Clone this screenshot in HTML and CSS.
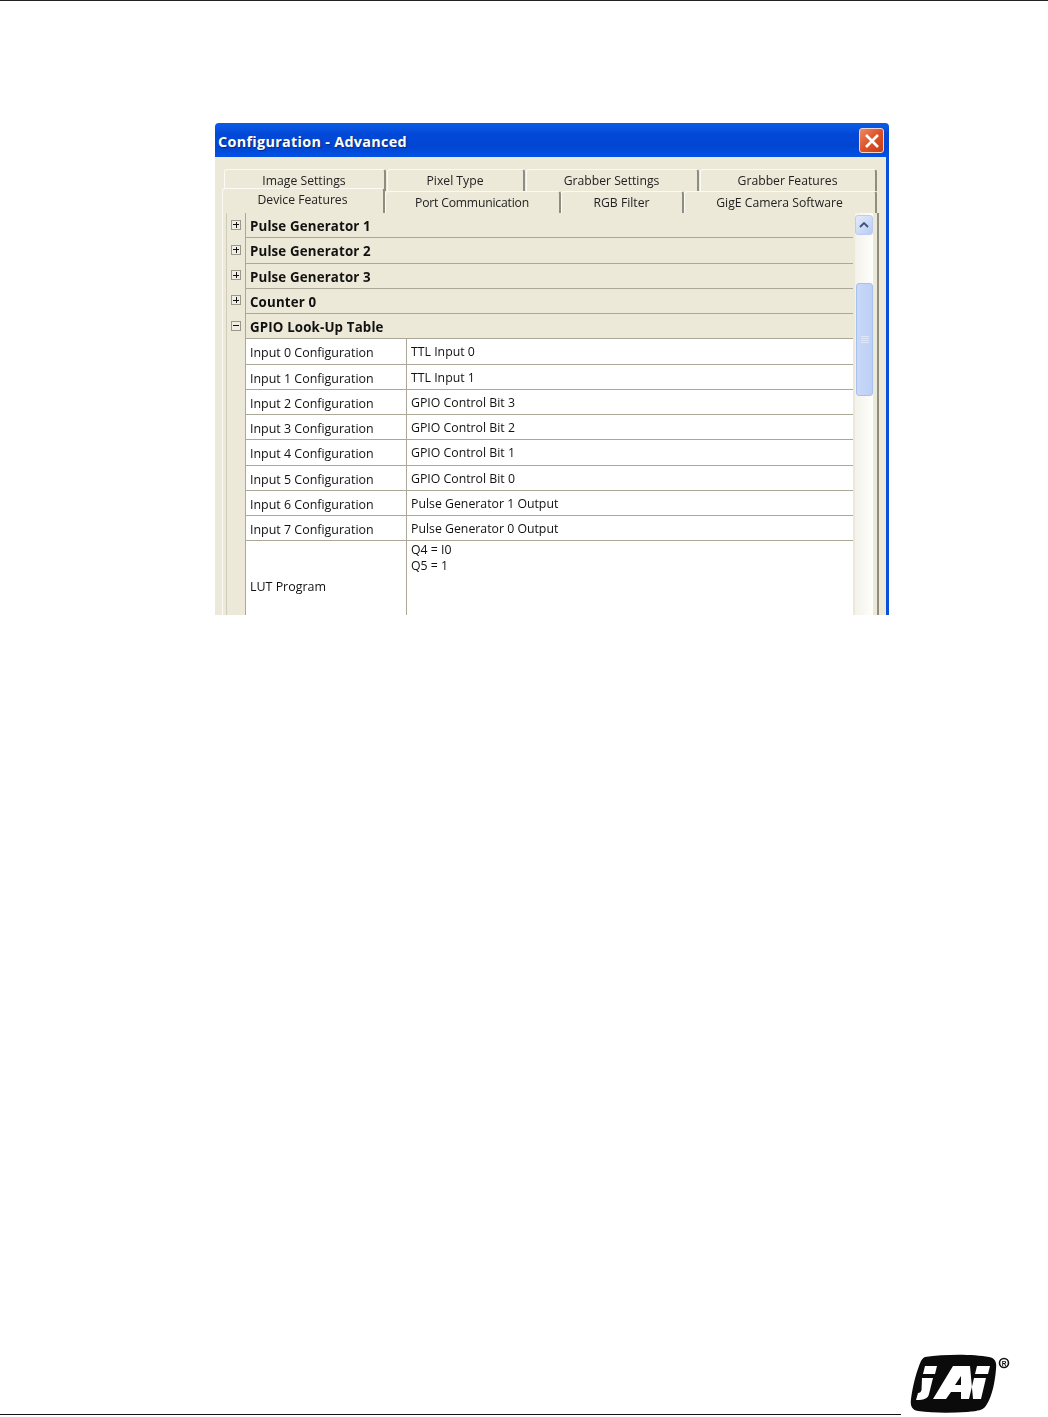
FILE: index.html
```html
<!DOCTYPE html>
<html lang="en">
<head>
<meta charset="utf-8">
<title>Configuration - Advanced</title>
<link rel="stylesheet" href="styles.css">
</head>
<body>
<div class="page">
  <div class="top-rule"></div>
  <section class="window">
    <header class="titlebar">
      <span class="title">Configuration - Advanced</span>
      <span class="close"><svg viewBox="0 0 12 12" width="16" height="16"><path d="M1.5 1.5l9 9M10.500 1.500l-9 9" stroke="#fff" stroke-width="2" fill="none"/></svg></span>
    </header>
    <div class="client">
      <div class="tabs tabs-back">
        <div class="tab t1">Image Settings</div>
        <div class="tab t2">Pixel Type</div>
        <div class="tab t3">Grabber Settings</div>
        <div class="tab t4">Grabber Features</div>
      </div>
      <div class="tabs tabs-front">
        <div class="tab active f1">Device Features</div>
        <div class="tab f2">Port Communication</div>
        <div class="tab f3">RGB Filter</div>
        <div class="tab f4">GigE Camera Software</div>
      </div>
      <div class="panel">
        <div class="grid">
          <div class="row section"><span class="gutter"><i class="box plus"></i></span><span class="head">Pulse Generator 1</span></div>
          <div class="row section"><span class="gutter"><i class="box plus"></i></span><span class="head">Pulse Generator 2</span></div>
          <div class="row section"><span class="gutter"><i class="box plus"></i></span><span class="head">Pulse Generator 3</span></div>
          <div class="row section"><span class="gutter"><i class="box plus"></i></span><span class="head">Counter 0</span></div>
          <div class="row section"><span class="gutter"><i class="box"></i></span><span class="head">GPIO Look-Up Table</span></div>
          <div class="row"><span class="gutter"></span><span class="name">Input 0 Configuration</span><span class="value">TTL Input 0</span></div>
          <div class="row"><span class="gutter"></span><span class="name">Input 1 Configuration</span><span class="value">TTL Input 1</span></div>
          <div class="row"><span class="gutter"></span><span class="name">Input 2 Configuration</span><span class="value">GPIO Control Bit 3</span></div>
          <div class="row"><span class="gutter"></span><span class="name">Input 3 Configuration</span><span class="value">GPIO Control Bit 2</span></div>
          <div class="row"><span class="gutter"></span><span class="name">Input 4 Configuration</span><span class="value">GPIO Control Bit 1</span></div>
          <div class="row"><span class="gutter"></span><span class="name">Input 5 Configuration</span><span class="value">GPIO Control Bit 0</span></div>
          <div class="row"><span class="gutter"></span><span class="name">Input 6 Configuration</span><span class="value">Pulse Generator 1 Output</span></div>
          <div class="row"><span class="gutter"></span><span class="name">Input 7 Configuration</span><span class="value">Pulse Generator 0 Output</span></div>
          <div class="row lut"><span class="gutter"></span><span class="name">LUT Program</span><span class="value">Q4 = I0<br>Q5 = 1</span></div>
        </div>
        <div class="scrollbar">
          <div class="sb-btn"><svg viewBox="0 0 10 6" width="10" height="6"><path d="M1 5l4-4 4 4" stroke="#3f5279" stroke-width="1.800" fill="none"/></svg></div>
          <div class="sb-thumb"><i></i><i></i><i></i><i></i></div>
        </div>
      </div>
    </div>
  </section>
  <footer class="footer">
    <div class="bottom-rule"></div>
    <svg class="logo" viewBox="0 0 110 67" width="110" height="67" role="img" aria-label="JAI logo">
      <path d="M20 7C40 4 68 4 84 7C90 8 92 12 91 19C90 32 87 46 82 54C79 60 74 61 62 62C44 63 28 63 13 61C7 60 5 56 6 49C8 34 12 20 16 11C17 9 18 8 20 7Z" fill="#0b0b0b"/>
      <path fill-rule="evenodd" d="M20 16h12l-2 8h-12ZM17 28h11l-4 16c-1 4-4 6-13 6l2-7c2 0 3-1 3.500-3ZM48 16h17l3 33h-12v-7h-10l-5 7h-13ZM56 26l-6 9h6ZM72 16h13l-2 8h-13ZM69 28h12l-5 21h-12Z" fill="#fff"/>
      <circle cx="99" cy="13" r="4.500" fill="none" stroke="#111" stroke-width="1.600"/>
      <text class="reg" x="99" y="15.500" text-anchor="middle">R</text>
    </svg>
  </footer>
</div>
</body>
</html>
```
FILE: styles.css
```css
* { box-sizing: border-box; }
html, body { margin: 0; padding: 0; background: #fff; }
.page {
  width: 1048px;
  height: 1417px;
  display: flex;
  flex-direction: column;
  overflow: hidden;
}
.top-rule { height: 1px; background: #222; flex: none; }
.window {
  flex: none;
  width: 674px;
  height: 492px;
  margin: 122px 0 0 215px;
  display: flex;
  flex-direction: column;
  overflow: hidden;
  background: #ece9d8;
  border-radius: 4px 4px 0 0;
  filter: blur(0.35px);
}
.titlebar {
  flex: none;
  height: 34px;
  display: flex;
  align-items: center;
  justify-content: space-between;
  padding: 1px 5px 0 3px;
  background: linear-gradient(#0a5ce0 0, #0a58e4 10%, #0349d8 30%, #0146d2 70%, #0152e6 100%);
}
.title {
  font: bold 14.400px "Open Sans", sans-serif;
  color: #fff;
  text-shadow: 1px 1px 1px #0a2a80;
  letter-spacing: 0.300px;
  padding-top: 2px;
}
.close {
  width: 25px;
  height: 25px;
  display: flex;
  align-items: center;
  justify-content: center;
  border: 1px solid #f0d8d0;
  border-radius: 3px;
  background: linear-gradient(135deg, #ee8a68, #dc5228 50%, #c93c14);
}
.client {
  flex: 1;
  min-height: 0;
  padding: 12px 3px 0 0;
  border-right: 3px solid #0a50dc;
}
.tabs {
  display: flex;
  font: 12.200px/20px "Open Sans", sans-serif;
  color: #222;
}
.tab {
  flex: none;
  text-align: center;
  background: #ece9d8;
  border-top: 1px solid #fbfaf4;
  border-right: 2px solid #8f8d80;
  border-radius: 3px 3px 0 0;
  box-shadow: inset 1px 0 0 #fbfaf4;
}
.tabs-back { height: 22px; padding-left: 9px; gap: 1px; }
.tabs-back .tab { height: 22px; line-height: 21px; }
.t1 { width: 162px; }
.t2 { width: 138px; }
.t3 { width: 173px; }
.t4 { width: 177px; }
.tabs-front { height: 22px; padding-left: 7px; position: relative; }
.tabs-front .tab { height: 22px; line-height: 21px; }
.f1 { width: 163px; }
.f2 { width: 176px; letter-spacing: -0.200px; }
.f3 { width: 123px; }
.f4 { width: 193px; }
.tabs-front .tab.active { line-height: 21px; margin-top: -3px; height: 25px; }
.panel {
  display: flex;
  height: 441px;
  margin: 0 4px 0 7px;
  padding: 0 0 0 3px;
  border-left: 1px solid #fbfaf4;
  border-right: 2px solid #8f8d80;
  background: #ece9d8;
}
.grid { width: 627px; flex: none; border-left: 1px solid #cfccbc; }
.row {
  display: flex;
  height: 25.250px;
  border-bottom: 1px solid #aca899;
  font: 12.300px/24px "Open Sans", sans-serif;
  color: #111;
  background: #fff;
}
.gutter {
  flex: none;
  width: 19px;
  height: calc(100% + 1px);
  background: #ece9d8;
  border-right: 1px solid #aca899;
  display: flex;
  align-items: center;
  justify-content: center;
}
.box {
  display: block;
  position: relative;
  width: 10px;
  height: 10px;
  margin: -2px 0 0 0;
  background: #f0eee4;
  border: 1px solid #9a9888;
}
.box::before {
  content: "";
  position: absolute;
  left: 1px;
  top: 3.500px;
  width: 6px;
  height: 1px;
  background: #111;
}
.plus::after {
  content: "";
  position: absolute;
  left: 3.500px;
  top: 1px;
  width: 1px;
  height: 6px;
  background: #111;
}
.section { background: #ece9d8; }
.head { padding: 1px 0 0 4px; font-size: 13.300px; letter-spacing: 0.150px; font-weight: 700; }
.name {
  flex: none;
  width: 161px;
  padding-left: 4px;
  border-right: 1px solid #aca899;
  padding-top: 2px;
  font-size: 12.450px;
}
.value { flex: 1; padding: 1px 0 0 4px; }
.lut { height: 90px; border-bottom: 0; }
.lut .name { display: flex; align-items: center; padding-top: 2px; }
.lut .value { line-height: 16px; padding-top: 1px; }
.scrollbar {
  flex: none;
  width: 18px;
  margin-left: 2px;
  background: linear-gradient(90deg, #f3f2ec, #fefefb);
  display: flex;
  flex-direction: column;
}
.sb-btn {
  height: 20px;
  border: 1px solid #bccdf0;
  border-radius: 3px;
  background: linear-gradient(135deg, #e4ecfc, #b8ccf4);
  display: flex;
  align-items: center;
  justify-content: center;
  margin: 2px 0 0;
}
.sb-thumb {
  height: 113px;
  margin: 48px 0 0 1px;
  border: 1px solid #a8c0ee;
  border-radius: 3px;
  background: linear-gradient(90deg, #c8d8f8, #bcd0f6);
  display: flex;
  flex-direction: column;
  align-items: center;
  justify-content: center;
  gap: 1px;
}
.sb-thumb i { display: block; width: 8px; height: 1px; background: #dfe8fb; }
.footer {
  flex: 1;
  position: relative;
}
.bottom-rule {
  position: absolute;
  left: 0;
  bottom: 2px;
  width: 901px;
  height: 1px;
  background: #111;
}
.logo {
  position: absolute;
  left: 905px;
  bottom: 0;
  filter: blur(0.4px);
}
.reg { font: bold 6.500px "Liberation Sans", sans-serif; fill: #111; }
```
